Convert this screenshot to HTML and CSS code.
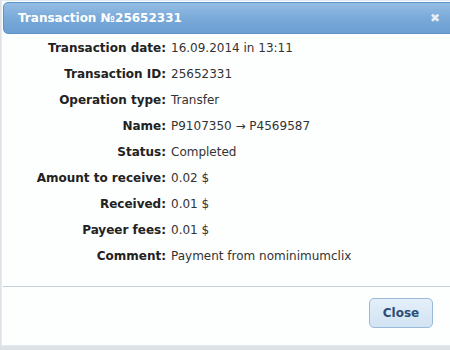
FILE: index.html
```html
<!DOCTYPE html>
<html lang="en">

<head>
    <meta charset="UTF-8">
    <title>Transaction №25652331</title>
    <link rel="stylesheet" href="styles.css">
</head>

<body>
    <div class="dialog">
        <div class="titlebar">
            <span class="title">Transaction №25652331</span>
            <span class="close-x">&#10006;</span>
        </div>
        <div class="content">
            <div class="label">Transaction date:</div>
            <div class="value">16.09.2014 in 13:11</div>
            <div class="label">Transaction ID:</div>
            <div class="value">25652331</div>
            <div class="label">Operation type:</div>
            <div class="value">Transfer</div>
            <div class="label">Name:</div>
            <div class="value">P9107350 &rarr; P4569587</div>
            <div class="label">Status:</div>
            <div class="value">Completed</div>
            <div class="label">Amount to receive:</div>
            <div class="value">0.02 $</div>
            <div class="label">Received:</div>
            <div class="value">0.01 $</div>
            <div class="label">Payeer fees:</div>
            <div class="value">0.01 $</div>
            <div class="label">Comment:</div>
            <div class="value">Payment from nominimumclix</div>
        </div>
        <div class="buttonpane">
            <button type="button" class="btn">Close</button>
        </div>
    </div>
</body>

</html>
```

FILE: styles.css
```css
* {
    margin: 0;
    padding: 0;
    box-sizing: border-box;
}

body {
    font-family: 'DejaVu Sans', Verdana, sans-serif;
    font-size: 12px;
    background: #dde2e6;
    width: 450px;
    height: 350px;
    overflow: hidden;
}

.dialog {
    margin-left: 1px;
    width: 460px;
    height: 346px;
    background: #fdfefe;
    border: 1px solid #e3eaf0;
    padding: 1px 0 0 1px;
}

.titlebar {
    height: 32px;
    display: flex;
    align-items: center;
    justify-content: space-between;
    padding: 0 19px 0 14px;
    border: 1px solid #5e93c8;
    border-radius: 5px;
    background: linear-gradient(#94bde4, #77a8d8 55%, #6c9fd2);
    color: #fff;
}

.title {
    font-weight: bold;
    font-size: 12px;
}

.close-x {
    font-size: 12px;
    color: #e9eef4;
}

.content {
    display: grid;
    grid-template-columns: 163px 1fr;
    grid-auto-rows: 26px;
    align-content: start;
    column-gap: 5px;
    padding-top: 1px;
    height: 252px;
    line-height: 26px;
}

.label {
    text-align: right;
    font-weight: bold;
    color: #222;
}

.value {
    color: #333;
}

.buttonpane {
    border-top: 1px solid #c3d2e0;
    padding: 11px 0 0 366px;
}

.btn {
    width: 64px;
    height: 30px;
    font-family: 'DejaVu Sans', Verdana, sans-serif;
    font-size: 12px;
    font-weight: bold;
    color: #2d4d75;
    background: linear-gradient(#e4eff9, #d2e3f3);
    border: 1px solid #9bb9d9;
    border-radius: 5px;
    cursor: pointer;
}
```
